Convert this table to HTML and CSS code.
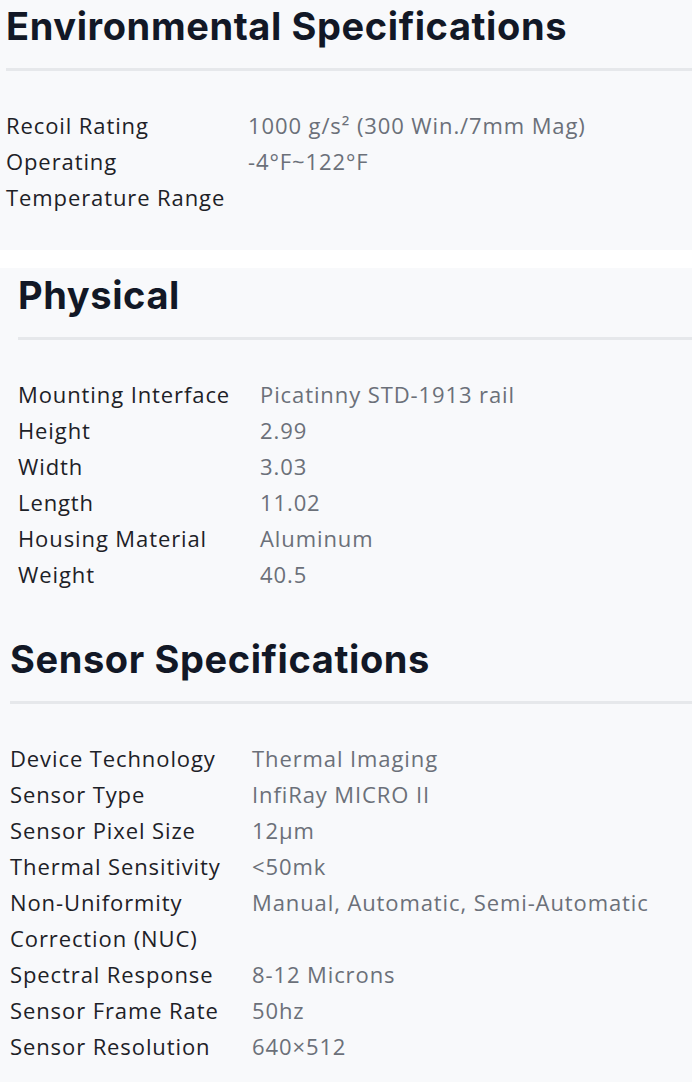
FILE: index.html
```html
<!DOCTYPE html>
<html lang="en">
<head>
<meta charset="utf-8">
<title>Specifications</title>
<link rel="stylesheet" href="styles.css">
</head>
<body>
<section class="spec-section env">
  <h2 class="spec-title">Environmental Specifications</h2>
  <dl class="spec-list">
    <dt>Recoil Rating</dt><dd>1000 g/s² (300 Win./7mm Mag)</dd>
    <dt>Operating Temperature Range</dt><dd>-4°F~122°F</dd>
  </dl>
</section>
<div class="group">
  <section class="spec-section phys">
    <h2 class="spec-title">Physical</h2>
    <dl class="spec-list">
      <dt>Mounting Interface</dt><dd>Picatinny STD-1913 rail</dd>
      <dt>Height</dt><dd>2.99</dd>
      <dt>Width</dt><dd>3.03</dd>
      <dt>Length</dt><dd>11.02</dd>
      <dt>Housing Material</dt><dd>Aluminum</dd>
      <dt>Weight</dt><dd>40.5</dd>
    </dl>
  </section>
  <section class="spec-section sensor">
    <h2 class="spec-title">Sensor Specifications</h2>
    <dl class="spec-list">
      <dt>Device Technology</dt><dd>Thermal Imaging</dd>
      <dt>Sensor Type</dt><dd>InfiRay MICRO II</dd>
      <dt>Sensor Pixel Size</dt><dd>12μm</dd>
      <dt>Thermal Sensitivity</dt><dd>&lt;50mk</dd>
      <dt>Non-Uniformity Correction (NUC)</dt><dd>Manual, Automatic, Semi-Automatic</dd>
      <dt>Spectral Response</dt><dd>8-12 Microns</dd>
      <dt>Sensor Frame Rate</dt><dd>50hz</dd>
      <dt>Sensor Resolution</dt><dd>640×512</dd>
    </dl>
  </section>
</div>
</body>
</html>
```

FILE: styles.css
```css
html, body {
  margin: 0;
  padding: 0;
  background: #ffffff;
}

body {
  font-family: "Open Sans", "Noto Sans", sans-serif;
  color: #1d2127;
}

.spec-section {
  background: #f8f9fb;
}

.group {
  background: #f8f9fb;
  margin-top: 18px;
}

.env {
  padding: 0 0 35px 6px;
}

.phys {
  padding: 1px 0 34px 18px;
}

.sensor {
  padding: 7px 0 18px 10px;
}

.spec-title {
  margin: 0;
  font-family: Inter, "Open Sans", sans-serif;
  font-weight: 700;
  font-size: 38px;
  line-height: 52px;
  letter-spacing: 0.6px;
  color: #121826;
  padding-bottom: 16px;
  border-bottom: 3px solid #e6e8eb;
}

.spec-list {
  display: grid;
  grid-template-columns: 242px 1fr;
  margin: 36px 0 0 0;
  font-size: 22px;
  line-height: 36px;
  letter-spacing: 0.9px;
}

.spec-list dt {
  margin: 0;
  padding-right: 14px;
  color: #1d2127;
}

.spec-list dd {
  margin: 0;
  color: #6b7079;
}
```
